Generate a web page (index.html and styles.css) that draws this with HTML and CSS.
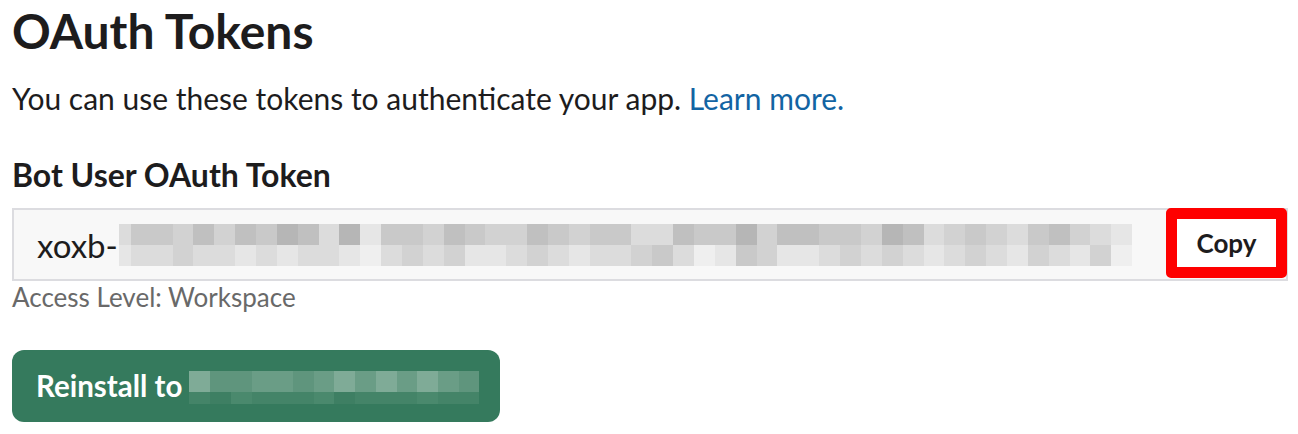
FILE: index.html
```html
<!DOCTYPE html>
<html lang="en">
<head>
<meta charset="utf-8">
<title>OAuth Tokens</title>
<link rel="stylesheet" href="styles.css">
</head>
<body>
<main class="page">
  <h1 class="title">OAuth Tokens</h1>
  <p class="lead">You can use these tokens to authenticate your app. <a class="link" href="#">Learn more.</a></p>
  <h2 class="label">Bot User OAuth Token</h2>
  <div class="token-field">
    <span class="token-prefix">xoxb-</span>
    <div class="token-pixels">
      <div class="px-row">
        <span class="g3 first"></span><span class="g5"></span><span class="g5"></span><span class="g4"></span><span class="g6"></span><span class="g4"></span><span class="g6"></span><span class="g5"></span><span class="g7"></span><span class="g6"></span><span class="g3"></span><span class="g7"></span><span class="g2"></span><span class="g5"></span><span class="g5"></span><span class="g4"></span><span class="g6"></span><span class="g5"></span><span class="g4"></span><span class="g4"></span><span class="g6"></span><span class="g5"></span><span class="g4"></span><span class="g5"></span><span class="g5"></span><span class="g3"></span><span class="g3"></span><span class="g6"></span><span class="g5"></span><span class="g5"></span><span class="g7"></span><span class="g4"></span><span class="g6"></span><span class="g6"></span><span class="g5"></span><span class="g5"></span><span class="g4"></span><span class="g7"></span><span class="g6"></span><span class="g3"></span><span class="g4"></span><span class="g5"></span><span class="g4"></span><span class="g3"></span><span class="g5"></span><span class="g6"></span><span class="g4"></span><span class="g3"></span><span class="g2"></span>
      </div>
      <div class="px-row">
        <span class="g2 first"></span><span class="g3"></span><span class="g3"></span><span class="g4"></span><span class="g3"></span><span class="g3"></span><span class="g2"></span><span class="g3"></span><span class="g2"></span><span class="g3"></span><span class="g3"></span><span class="g2"></span><span class="g1"></span><span class="g3"></span><span class="g4"></span><span class="g3"></span><span class="g4"></span><span class="g2"></span><span class="g2"></span><span class="g3"></span><span class="g4"></span><span class="g3"></span><span class="g2"></span><span class="g3"></span><span class="g3"></span><span class="g4"></span><span class="g5"></span><span class="g3"></span><span class="g1"></span><span class="g2"></span><span class="g5"></span><span class="g4"></span><span class="g2"></span><span class="g2"></span><span class="g3"></span><span class="g4"></span><span class="g3"></span><span class="g4"></span><span class="g3"></span><span class="g2"></span><span class="g3"></span><span class="g4"></span><span class="g3"></span><span class="g2"></span><span class="g4"></span><span class="g3"></span><span class="g2"></span><span class="g4"></span><span class="g1"></span>
      </div>
    </div>
    <button class="copy" type="button">Copy</button>
  </div>
  <div class="access">Access Level: Workspace</div>
  <button class="reinstall" type="button">
    <span class="reinstall-text">Reinstall to</span>
    <span class="workspace-pixels">
      <span class="px-row">
        <span class="w1"></span><span class="w3"></span><span class="w3"></span><span class="w2"></span><span class="w2"></span><span class="w3"></span><span class="w2"></span><span class="w1"></span><span class="w2"></span><span class="w1"></span><span class="w2"></span><span class="w1"></span><span class="w2"></span><span class="w3"></span>
      </span>
      <span class="px-row">
        <span class="d2"></span><span class="d1"></span><span class="d3"></span><span class="d2"></span><span class="d2"></span><span class="d2"></span><span class="d3"></span><span class="d1"></span><span class="d2"></span><span class="d2"></span><span class="d2"></span><span class="d3"></span><span class="d2"></span><span class="d2"></span>
      </span>
    </span>
  </button>
</main>
</body>
</html>
```

FILE: styles.css
```css
* {
  box-sizing: border-box;
}

html, body {
  margin: 0;
  padding: 0;
  background: #ffffff;
}

body {
  font-family: Lato, "Noto Sans", sans-serif;
  color: #1d1c1d;
}

.page {
  padding: 2px 0 0 12px;
  width: 1288px;
}

.title {
  margin: 0;
  font-size: 48px;
  line-height: 58px;
  font-weight: 700;
  color: #1d1c1d;
}

.lead {
  margin: 20px 0 0;
  font-size: 30px;
  line-height: 36px;
  color: #1d1c1d;
}

.link {
  color: #1264a3;
  text-decoration: none;
}

.label {
  margin: 40px 0 0;
  font-size: 32px;
  line-height: 38px;
  font-weight: 700;
}

.token-field {
  position: relative;
  margin-top: 14px;
  height: 73px;
  display: flex;
  align-items: center;
  padding-left: 23px;
  background: #f8f8f8;
  border: 2px solid #dcdce0;
}

.token-prefix {
  font-size: 33px;
  line-height: 40px;
  color: #1d1c1d;
}

.token-pixels {
  display: flex;
  flex-direction: column;
  width: 1013px;
  margin-left: 1px;
}

.px-row {
  display: flex;
  height: 21px;
}

.px-row > span {
  flex: 1;
}

.token-pixels .px-row > span.first {
  flex: 0 0 12px;
}

.g1 { background: #efefef; }
.g2 { background: #e6e6e6; }
.g3 { background: #dcdcdc; }
.g4 { background: #d2d2d2; }
.g5 { background: #c9c9c9; }
.g6 { background: #c0c0c0; }
.g7 { background: #b6b6b6; }

.copy {
  position: absolute;
  top: -2px;
  right: -1px;
  width: 121px;
  height: 70px;
  border: 11px solid #fe0000;
  border-radius: 5px;
  background: #ffffff;
  font-family: Lato, "Noto Sans", sans-serif;
  font-weight: 700;
  font-size: 26px;
  color: #1d1c1d;
  padding: 0;
  cursor: pointer;
}

.access {
  margin-top: 1px;
  font-size: 26px;
  line-height: 31px;
  color: #696969;
}

.reinstall {
  margin-top: 37px;
  width: 488px;
  height: 72px;
  display: flex;
  align-items: center;
  padding: 0 0 0 24px;
  border: none;
  border-radius: 12px;
  background: #357a5d;
  color: #ffffff;
  font-family: Lato, "Noto Sans", sans-serif;
  font-weight: 700;
  font-size: 29.5px;
  cursor: pointer;
}

.reinstall-text {
  line-height: 34px;
}

.workspace-pixels {
  display: flex;
  flex-direction: column;
  width: 290px;
  margin-left: 7px;
  margin-top: 2px;
}

.workspace-pixels .px-row:last-child {
  height: 12px;
}

.w1 { background: #7fab97; }
.w2 { background: #6a9d86; }
.w3 { background: #5f957d; }
.d1 { background: #3e7f63; }
.d2 { background: #448468; }
.d3 { background: #4a896d; }
```
